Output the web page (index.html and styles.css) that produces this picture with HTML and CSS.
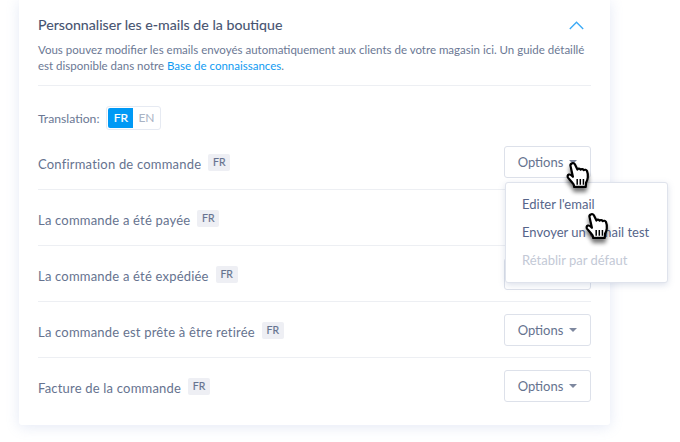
FILE: index.html
```html
<!DOCTYPE html>
<html lang="fr">
<head>
<meta charset="utf-8">
<title>Personnaliser les e-mails</title>
<link rel="stylesheet" href="styles.css">
</head>
<body>
<svg class="defs" width="0" height="0" aria-hidden="true">
  <defs>
    <filter id="hand-shadow" x="-40%" y="-40%" width="180%" height="190%">
      <feGaussianBlur in="SourceAlpha" stdDeviation="2"/>
      <feOffset dx="0" dy="4"/>
      <feComponentTransfer><feFuncA type="linear" slope="0.55"/></feComponentTransfer>
      <feMerge><feMergeNode/><feMergeNode in="SourceGraphic"/></feMerge>
    </filter>
    <symbol id="hand" viewBox="0 0 22 26">
      <path d="M5.5 2.2c1.200-.8 2.400-.2 3 1l2 4.200c.5-1 2.200-1 2.800.1.6-.8 2.200-.7 2.800.4.8-.6 2.200-.4 2.700.8.6 1.500.9 3.500.7 5.500-.2 2-.8 3.300-1.500 4.500l-.3 3.800H7.700l-.5-2.300c-1.300-1.700-3-3.600-4.700-5.600-.9-1.200-.6-2.400.5-2.800.9-.3 1.800.1 2.700 1l.9.9L4.600 4.800c-.4-1-.1-2 .9-2.600z" fill="#fff" stroke="#000" stroke-width="1.900" stroke-linejoin="round"/>
      <path d="M10.300 15.500v5M13 15.500v5M15.700 15.500v5" stroke="#000" stroke-width="1.300" fill="none"/>
    </symbol>
  </defs>
</svg>
<main class="card">
  <header class="card-head">
    <h2 class="title">Personnaliser les e-mails de la boutique</h2>
    <svg class="chevron" width="15" height="9" viewBox="0 0 15 9"><path d="M.8 8L7.500 1.200 14.200 8" fill="none" stroke="#3aa9f5" stroke-width="1.300"/></svg>
  </header>
  <p class="intro">Vous pouvez modifier les emails envoyés automatiquement aux clients de votre magasin ici. Un guide détaillé est disponible dans notre <a class="link" href="#">Base de connaissances</a>.</p>
  <div class="lang">
    <span class="lang-label">Translation:</span>
    <span class="switch"><span class="switch-on">FR</span><span class="switch-off">EN</span></span>
  </div>
  <ul class="rows">
    <li class="row"><span class="row-name">Confirmation de commande</span><span class="tag">FR</span><button class="btn">Options<i class="caret"></i></button></li>
    <li class="row"><span class="row-name">La commande a été payée</span><span class="tag">FR</span></li>
    <li class="row"><span class="row-name">La commande a été expédiée</span><span class="tag">FR</span><button class="btn">Options<i class="caret"></i></button></li>
    <li class="row"><span class="row-name">La commande est prête à être retirée</span><span class="tag">FR</span><button class="btn">Options<i class="caret"></i></button></li>
    <li class="row"><span class="row-name">Facture de la commande</span><span class="tag">FR</span><button class="btn">Options<i class="caret"></i></button></li>
  </ul>
</main>
<div class="menu">
  <div class="menu-item">Editer l'email</div>
  <div class="menu-item">Envoyer un e-mail test</div>
  <div class="menu-item menu-item-off">Rétablir par défaut</div>
</div>
<svg class="cursor cursor-a"><use href="#hand"/></svg>
<svg class="cursor cursor-b"><use href="#hand"/></svg>
</body>
</html>
```
FILE: styles.css
```css
* { box-sizing: border-box; }
html, body { margin: 0; height: 442px; overflow: hidden; background: #fff; }
body { font-family: Lato, "Noto Sans", sans-serif; color: #5c6a8a; position: relative; }
.defs { position: absolute; }
.card {
  width: 591px;
  height: 425px;
  margin-left: 19px;
  padding: 15px 19px 0;
  background: #fff;
  border-radius: 0 0 3px 3px;
  box-shadow: 0 2px 14px rgba(120, 145, 205, .2);
}
.card-head { display: flex; justify-content: space-between; align-items: center; height: 19px; padding-right: 7px; }
.title { margin: 0; font-size: 14.2px; font-weight: 400; color: #45526f; -webkit-text-stroke: .1px #45526f; }
.chevron { margin-top: 2px; }
.intro {
  margin: 5px 0 0;
  height: 47px;
  padding-top: 3px;
  font-size: 11.5px;
  line-height: 16px;
  color: #6b7894;
  border-bottom: 1px solid #edeff3;
}
.link { color: #0f9bf2; text-decoration: none; }
.lang { display: flex; align-items: center; gap: 7px; margin-top: 20px; height: 24px; }
.lang-label { font-size: 12.2px; color: #6b7894; }
.switch { display: flex; height: 24px; padding: 1px; border: 1px solid #e6eaf2; border-radius: 3px; }
.switch-on { width: 25px; background: #0099f5; color: #fff; font-size: 12px; text-align: center; line-height: 20px; border-radius: 2px 0 0 2px; -webkit-text-stroke: .2px #fff; }
.switch-off { width: 26px; color: #a9b3c4; font-size: 12px; text-align: center; line-height: 20px; }
.rows { list-style: none; margin: 0; padding: 0; }
.row { display: flex; align-items: center; height: 56px; border-bottom: 1px solid #edeff3; }
.row:first-child { margin-top: 4px; }
.row:last-child { border-bottom: 0; padding-bottom: 1px; }
.row-name { font-size: 13px; color: #66738f; letter-spacing: .2px; padding-top: 5px; }
.tag { margin-left: 7px; margin-top: 1px; width: 22px; height: 17px; background: #eeeff4; border-radius: 2px; font-size: 10.5px; color: #66738f; text-align: center; line-height: 17px; -webkit-text-stroke: .15px #66738f; }
.btn {
  margin-left: auto;
  display: flex;
  align-items: center;
  justify-content: center;
  gap: 6px;
  width: 87px;
  height: 32px;
  background: #fff;
  border: 1px solid #dde1ea;
  border-radius: 3px;
  font: inherit;
  font-size: 13px;
  color: #66738f;
}
.caret { width: 0; height: 0; border: 4px solid transparent; border-top: 4px solid #7e889f; border-bottom: 0; margin-top: 1px; }
.menu {
  position: absolute;
  left: 505px;
  top: 182px;
  width: 163px;
  height: 101px;
  padding-top: 8px;
  background: #fff;
  border: 1px solid #dfe3ec;
  border-radius: 3px;
  box-shadow: 0 2px 6px rgba(120, 135, 175, .25);
}
.menu-item { height: 28px; padding-left: 16px; font-size: 13px; line-height: 27px; color: #56658a; white-space: nowrap; }
.menu-item-off { color: #c3c9d6; }
.cursor { position: absolute; width: 26px; height: 30px; overflow: visible; filter: url(#hand-shadow); }
.cursor-a { left: 565px; top: 161px; }
.cursor-b { left: 584px; top: 212px; }
```
